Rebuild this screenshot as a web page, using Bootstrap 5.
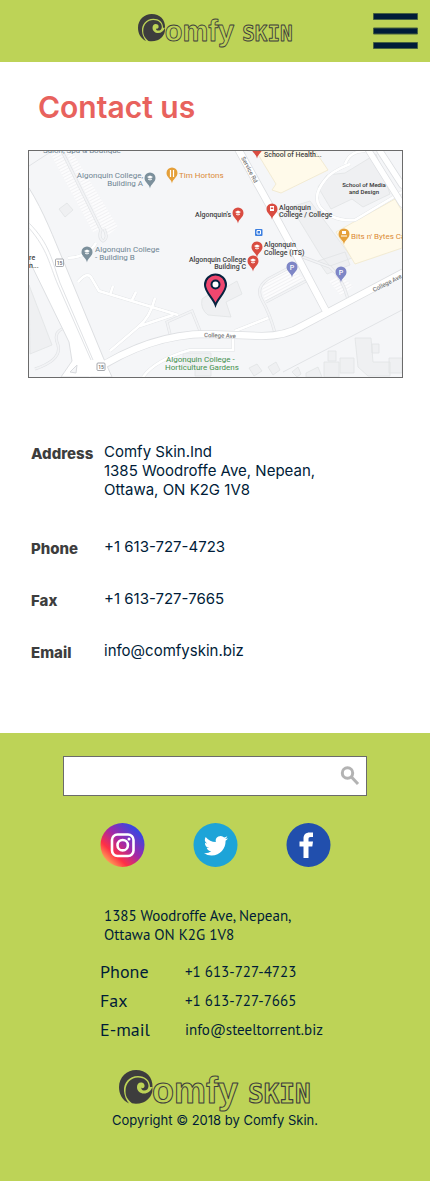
<!DOCTYPE html>
<html lang="en">
<head>
<meta charset="utf-8">
<meta name="viewport" content="width=device-width, initial-scale=1">
<title>Comfy Skin - Contact us</title>
<link href="https://cdn.jsdelivr.net/npm/bootstrap@5.3.0/dist/css/bootstrap.min.css" rel="stylesheet">
<style>
  :root { --lime: #bdd357; --navy: #001c38; --coal: #3d3d3d; --coral: #e8625d; }
  body { font-family: Inter, sans-serif; font-size: 15px; line-height: 19px; color: var(--navy); background: #fff; }
  a { color: inherit; text-decoration: none; }
  svg { display: block; }
  .bg-lime { background: var(--lime); }
  .site-header { display: grid; grid-template-columns: 1fr auto 1fr; height: 62px; }
  .header-logo { width: 155px; grid-column: 2; }
  .footer-logo { width: 192px; margin-top: 28px; }
  .menu-btn { width: 45px; height: 36px; border: 0; border-radius: 0; padding: 0; justify-self: end; margin-right: 12px; }
  .page-title { font-size: 30px; line-height: 38px; font-weight: 600; color: var(--coral); margin: 26px 38px 24px; }
  .map-box { margin: 0 27px 0 28px; border: 1px solid #6b6b6b; }
  .map-box text { font-family: Roboto, sans-serif; font-size: 7px; font-weight: 500; }
  .map-box .place text { font-size: 8px; font-weight: 400; }
  .map-box .fine text, .map-box text.fine { font-size: 6px; }
  .map-box .shield text { font-size: 5px; }
  .details { margin: 64px 31px 71px; display: flex; flex-direction: column; gap: 31px; }
  .details .entry { display: grid; grid-template-columns: 73px 1fr; }
  .details .entry:first-child { margin-bottom: 7px; }
  .details dt { font-weight: 800; color: var(--coal); padding-top: 2px; }
  .site-footer { padding: 23px 0 53px; }
  .search { width: 304px; height: 40px; border: 1px solid #6b6b6b; background: #fff; }
  .search input { border: 0; border-radius: 0; box-shadow: none; background: transparent; }
  .search button { border: 0; padding: 0 6px 0 0; }
  .social { gap: 48px; margin: 27px 0 39px; }
  .footer-info { width: 230px; font-family: "PT Sans", "Noto Sans", sans-serif; font-size: 15px; }
  .footer-info dl { display: grid; grid-template-columns: 85px 1fr; row-gap: 5px; line-height: 24px; }
  .footer-info dt { font-size: 18px; font-weight: 400; }
  .copyright { font-size: 13px; line-height: 16px; }
</style>
</head>
<body>

<svg width="0" height="0" class="position-absolute" aria-hidden="true">
  <defs>
    <symbol id="logo" viewBox="0 0 192 42">
      <path d="M10 33.500 C3 30 0 24 0 17 C0 7 8 0 17 0 C27 0 34 7 33.500 17 L31 17 C31 10 26 6 19 6 C10 6 4.500 13 5 21 Q5.500 28 10 33.500Z" fill="#3d3d3d"/>
      <path d="M13 33.300 C8 29 6.500 26 6.500 21 C6.500 13 12 7.500 19 7.500 C25 7.500 29.500 11 29.500 16 C29.500 19 27.500 20.500 25 20.500 C23 20.500 22 19 22.500 17.500 C23 18.500 25 18.500 25.500 16.500 C26 14 24 12.500 22 12.500 C19.500 12.500 18 14.500 18 17 C18 21 21 23.500 25 23.500 C29 23.500 32 21 33.300 17 C34.500 24 30 30 24 32.500 Q18 34.500 13 33.300Z" fill="#3d3d3d"/>
      <g fill="#bdd357" stroke="#3d3d3d" stroke-linejoin="round" font-weight="700">
        <text x="33" y="33" font-family="Liberation Sans, sans-serif" font-size="36" stroke-width="1">omfy</text>
        <text x="129" y="33" font-family="DejaVu Sans Mono, monospace" font-size="26" stroke-width="1.100">SKIN</text>
      </g>
    </symbol>
    <symbol id="pin" viewBox="-6 -6 12 17">
      <path d="M0 10.500 C-.6 6 -5.500 4.500 -5.500 0 A5.500 5.500 0 0 1 5.500 0 C5.500 4.500 .6 6 0 10.500Z"/>
    </symbol>
    <symbol id="cap" viewBox="-3 -3 6 6">
      <path d="M-3 -1 L0 -2.500 L3 -1 L0 .7Z M-2 .4 L0 1.500 L2 .4 V1.600 L0 2.600 L-2 1.600Z" fill="#fff"/>
    </symbol>
    <linearGradient id="insta" x1=".1" y1=".9" x2=".8" y2=".15">
      <stop offset="0" stop-color="#ffb85c"/><stop offset=".28" stop-color="#ff3045"/><stop offset=".6" stop-color="#a128a8"/><stop offset="1" stop-color="#3b46e0"/>
    </linearGradient>
    <pattern id="hatch" width="3" height="3" patternUnits="userSpaceOnUse" patternTransform="rotate(62)">
      <rect width="3" height="3" fill="#fcfcfd"/><path d="M0 0V3" stroke="#e6e7e9"/>
    </pattern>
  </defs>
</svg>

<header class="site-header bg-lime align-items-center">
  <a href="#" class="header-logo" aria-label="Comfy Skin home"><svg viewBox="0 0 192 42" width="100%"><use href="#logo"/></svg></a>
  <button class="btn menu-btn" type="button" aria-label="Menu">
    <svg width="45" height="36" viewBox="0 0 45 36" fill="#001c38" stroke="#46613f" stroke-width="1"><path d="M.5 .5h44v6H.5zM.5 15h44v6H.5zM.5 29.500h44v6H.5z"/></svg>
  </button>
</header>

<main>
  <h1 class="page-title">Contact us</h1>

  <div class="map-box">
    <svg viewBox="29 151 373 226" width="100%" role="img" aria-label="Map of Algonquin College">
      <rect x="29" y="151" width="373" height="226" fill="#f5f6f8"/>
      <!-- lots and buildings -->
      <g fill="#eff0f2" stroke="#e1e3e5" stroke-width=".8">
        <path d="M29 285 L52 345 L30 354Z M59 209 L67 203 L73 210 L65 217Z"/>
        <path d="M318 187 L327 175 L345 173 L376 154 L390 194 L363 207 L352 199 L331 209Z"/>
        <path d="M291 207 L310 201 L352 258 L330 266 L321 256Z M318 261 L345 252 L350 265 L327 274Z"/>
        <path d="M202 299 Q207 294 216 293 L237 281 L242 294 L226 302 L231 317 L208 315 Q200 309 202 299Z"/>
        <path d="M355 338 H371 L373 362 H390 V376 H368 L358 367Z M328 351 H336 V361 H328Z M340 358 H354 V373 H340Z M324 362 H339 V377 H324Z M389 358 H402 V373 H389Z M372 344 H379 V353 H372Z"/>
        <path d="M249 368 L257 364 L262 371 L254 376Z M268 367 L276 362 L280 370 L273 375Z M292 372 L298 367 L301 374 L297 377Z M306 373 L318 367 L322 377 H306Z"/>
        <path d="M183 353 H211 V376 H195 V365 H183Z"/>
      </g>
      <g fill="#fffaea" stroke="#f0e7cc" stroke-width=".8">
        <path d="M256 151 H315 L328 170 L281 193 L272 190 L276 184Z M336 232 L395 199 L402 211 V248 L355 264Z"/>
      </g>
      <path d="M261 285 L289 267 L304 279 L265 301Z M329 281 L340 275 L353 286 L341 296Z M49 151 L60 151 L103 228 L93 232Z M65 151 L74 155 L118 227 L107 236Z" fill="url(#hatch)"/>
      <!-- minor lanes -->
      <g fill="none" stroke="#e0e2e5" stroke-width="3">
        <path d="M62 151 L101 230 Q98 238 103 241 Q109 238 104 229 M62 329 Q53 333 58 345 Q62 360 35 369"/>
        <path d="M170 334 L167 322 L192 311 L200 331 M275 333 Q270 314 262 300 Q255 288 268 279 L298 263 M266 302 L306 281"/>
        <path d="M300 256 Q316 262 330 267 Q342 277 348 299"/>
      </g>
      <g fill="none" stroke="#f2f3f5" stroke-width="1.800">
        <path d="M62 151 L101 230 Q98 238 103 241 Q109 238 104 229 M62 329 Q53 333 58 345 Q62 360 35 369"/>
        <path d="M170 334 L167 322 L192 311 L200 331 M275 333 Q270 314 262 300 Q255 288 268 279 L298 263 M266 302 L306 281"/>
        <path d="M300 256 Q316 262 330 267 Q342 277 348 299"/>
      </g>
      <g fill="none" stroke-width="3.500" stroke="#e8eaec">
        <path id="lanes" d="M78 282 Q88 270 92 279 L99 291 L178 315 M113 286 L110 295 M136 292 L132 300 M155 298 Q150 318 138 327 L110 351 M173 315 L140 326 M68 258 Q88 257 96 243 M235 331 L268 318 M233 338 V350 H190 Q155 360 143 377 M345 164 Q350 151 365 151 M350 164 Q330 172 325 180 Q312 196 320 207 Q333 222 355 220 L402 192"/>
      </g>
      <use href="#lanes" fill="none" stroke="#fff" stroke-width="2"/>
      <path d="M78 282 Q88 270 92 279 L99 291 L178 315 M113 286 L110 295 M136 292 L132 300 M155 298 Q150 318 138 327 L110 351 M173 315 L140 326 M68 258 Q88 257 96 243 M235 331 L268 318 M233 338 V350 H190 Q155 360 143 377 M345 164 Q350 151 365 151 M350 164 Q330 172 325 180 Q312 196 320 207 Q333 222 355 220 L402 192" fill="none" stroke="#fff" stroke-width="2.200"/>
      <!-- main roads -->
      <g fill="none" stroke="#dddfe2" stroke-linecap="round">
        <path d="M237 147 L272 210 L299 260 L326 311" stroke-width="8"/>
        <path d="M96 370 Q150 334 207 334 L262 336 Q286 336 302 326 L402 273" stroke-width="8"/>
        <path d="M369 151 L402 204 M380 151 L402 185" stroke-width="7"/>
      </g>
      <path d="M29 188 C44 212 54 239 63 260 L103 357 L112 377 H61 L72 361 L69 342 L29 260Z" fill="#fff" stroke="#dddfe2"/>
      <g fill="none" stroke="#fff" stroke-linecap="round">
        <path d="M237 147 L272 210 L299 260 L326 311" stroke-width="6.500"/>
        <path d="M90 373 Q150 334 207 334 L262 336 Q286 336 302 326 L402 273" stroke-width="6.500"/>
        <path d="M369 151 L402 204 M380 151 L402 185" stroke-width="5.500"/>
      </g>
      <path d="M29 223 C50 244 52 261 60 283 L93 360 M29 228 C48 250 49 264 58 285 L91 360 M29 166 L52 151 M283 372 L402 310" fill="none" stroke="#e1e3e6"/>
      <path d="M70 372 L77 365 L76 373Z" fill="#f5f6f8" stroke="#d8dade"/>
      <g fill="#fff" stroke="#8f9399" stroke-width=".8"><rect x="55.500" y="259" width="8" height="7.500" rx="1"/><rect x="97" y="363" width="8" height="7.500" rx="1"/></g>
      <g class="shield" fill="#666" text-anchor="middle"><text x="59.500" y="265">15</text><text x="101" y="369">15</text></g>
      <!-- pins -->
      <g fill="#7c909c"><use href="#pin" x="144" y="172" width="12" height="17"/><use href="#pin" x="81" y="246" width="12" height="17"/></g>
      <g fill="#e5a03a"><use href="#pin" x="166" y="167" width="12" height="17"/><use href="#pin" x="338" y="228" width="12" height="17"/></g>
      <g fill="#d94c41"><use href="#pin" x="251" y="142" width="12" height="17"/><use href="#pin" x="232" y="207" width="12" height="17"/><use href="#pin" x="266" y="203" width="12" height="17"/><use href="#pin" x="251" y="241" width="12" height="17"/><use href="#pin" x="247" y="255" width="12" height="17"/></g>
      <g fill="#7e86c6"><use href="#pin" x="286" y="261" width="12" height="17"/><use href="#pin" x="335" y="266" width="12" height="17"/></g>
      <use href="#cap" x="147" y="175" width="6" height="6"/><use href="#cap" x="84" y="249" width="6" height="6"/><use href="#cap" x="235" y="210" width="6" height="6"/><use href="#cap" x="254" y="244" width="6" height="6"/><use href="#cap" x="250" y="258" width="6" height="6"/>
      <path d="M270 206h4v5h-4z M342 231h4v3h-4z M341 235.500h6v1h-6z" fill="#fff"/><path d="M270.800 207.500h2.400v1.500h-2.400z" fill="#d94c41"/>
      <path d="M170.500 170v2.500M170.500 172v5M173.500 170v7" stroke="#fff" stroke-width="1.200"/>
      <g fill="#fff" text-anchor="middle"><text x="292" y="270">P</text><text x="341" y="275">P</text></g>
      <rect x="255" y="229" width="7.500" height="7" rx="1" fill="#3c7fe0"/><path d="M257 230.500h3.500v3.500H257z" fill="none" stroke="#fff"/>
      <path d="M215.500 305 C213 298 205 292 205 285 A10.500 10.500 0 0 1 226 285 C226 292 218 298 215.500 305Z" fill="#ef476f" stroke="#06223f" stroke-width="2"/>
      <circle cx="215.500" cy="284.500" r="4" fill="#fff" stroke="#06223f" stroke-width="2"/>
      <!-- place names -->
      <g class="place" fill="#6f8593">
        <text x="43" y="153">Salon, Spa &amp; Boutique</text>
        <g text-anchor="end"><text x="143" y="178">Algonquin College,</text><text x="143" y="186">Building A</text></g>
        <text x="95" y="252">Algonquin College</text><text x="95" y="260">- Building B</text>
      </g>
      <g class="place" fill="#db8a35"><text x="179" y="178">Tim Hortons</text><text x="351" y="239">Bits n' Bytes Ca</text></g>
      <g fill="#3f3f3f">
        <text x="264" y="157">School of Health...</text>
        <g text-anchor="end"><text x="231" y="217">Algonquin's</text><text x="246" y="262">Algonquin College</text><text x="246" y="269">Building C</text></g>
        <text x="279" y="210">Algonquin</text><text x="279" y="217">College / College</text>
        <text x="264" y="247">Algonquin</text><text x="264" y="255">College (ITS)</text>
        <text x="29" y="260">re</text><text x="29" y="268">n...</text>
      </g>
      <g class="fine" fill="#333" text-anchor="middle"><text x="364" y="187">School of Media</text><text x="364" y="194">and Design</text></g>
      <g class="fine" fill="#777">
        <text x="204" y="337" transform="rotate(2 204 337)">College Ave</text>
        <text x="374" y="292" transform="rotate(-27 374 292)">College Ave</text>
        <text x="241" y="158" transform="rotate(62 241 158)">Service Rd</text>
      </g>
      <g class="place" fill="#43904e"><text x="166" y="362">Algonquin College -</text><text x="165" y="370">Horticulture Gardens</text></g>
    </svg>
  </div>

  <dl class="details">
    <div class="entry"><dt>Address</dt><dd class="mb-0">Comfy Skin.Ind<br>1385 Woodroffe Ave, Nepean,<br>Ottawa, ON K2G 1V8</dd></div>
    <div class="entry"><dt>Phone</dt><dd class="mb-0">+1 613-727-4723</dd></div>
    <div class="entry"><dt>Fax</dt><dd class="mb-0">+1 613-727-7665</dd></div>
    <div class="entry"><dt>Email</dt><dd class="mb-0"><a href="mailto:info@comfyskin.biz">info@comfyskin.biz</a></dd></div>
  </dl>
</main>

<footer class="site-footer bg-lime d-flex flex-column align-items-center">
  <form class="search d-flex" role="search">
    <input class="form-control" type="search" aria-label="Search">
    <button class="btn" type="submit" aria-label="Submit search">
      <svg width="20" height="20" viewBox="0 0 20 20" fill="none" stroke="#b3b3b3" stroke-width="3"><circle cx="7.500" cy="7" r="5.200"/><path d="M11 10.500 L18 18"/></svg>
    </button>
  </form>

  <nav class="social d-flex" aria-label="Social media">
    <a href="#" aria-label="Instagram"><svg width="45" height="44" viewBox="0 0 45 44"><circle cx="22.500" cy="22" r="22" fill="url(#insta)"/><g fill="none" stroke="#fff" stroke-width="2.600"><rect x="12" y="11.500" width="21.500" height="21.500" rx="5.500"/><circle cx="22.700" cy="22.200" r="5.200"/></g><circle cx="29" cy="16" r="1.500" fill="#fff"/></svg></a>
    <a href="#" aria-label="Twitter"><svg width="45" height="44" viewBox="0 0 45 44"><circle cx="22.500" cy="22" r="22" fill="#1da4d8"/><path transform="translate(11 10) scale(1.500)" fill="#fff" d="M5.026 15c6.038 0 9.341-5.003 9.341-9.334 0-.14 0-.282-.006-.422A6.685 6.685 0 0 0 16 3.542a6.658 6.658 0 0 1-1.889.518 3.301 3.301 0 0 0 1.447-1.817 6.533 6.533 0 0 1-2.087.793A3.286 3.286 0 0 0 7.875 6.030a9.325 9.325 0 0 1-6.767-3.429 3.289 3.289 0 0 0 1.018 4.382A3.323 3.323 0 0 1 .64 6.575v.045a3.288 3.288 0 0 0 2.632 3.218 3.203 3.203 0 0 1-.865.115 3.230 3.230 0 0 1-.614-.057 3.283 3.283 0 0 0 3.067 2.277A6.588 6.588 0 0 1 .78 13.580a6.320 6.320 0 0 1-.78-.045A9.344 9.344 0 0 0 5.026 15z"/></svg></a>
    <a href="#" aria-label="Facebook"><svg width="45" height="44" viewBox="0 0 45 44"><circle cx="22.500" cy="22" r="22" fill="#214fad"/><path fill="#fff" d="M17.500 35 V23.500 H13.500 V18.500 H17.500 V15.500 C17.500 11.500 20 9.500 23.500 9.500 H27 V14 H24.500 C23 14 22.500 14.800 22.500 16 V18.500 H27 L26.300 23.500 H22.500 V35Z"/></svg></a>
  </nav>

  <div class="footer-info">
    <address class="ms-1 mb-3">1385 Woodroffe Ave, Nepean,<br>Ottawa ON K2G 1V8</address>
    <dl class="mb-0">
      <dt>Phone</dt><dd class="mb-0">+1 613-727-4723</dd>
      <dt>Fax</dt><dd class="mb-0">+1 613-727-7665</dd>
      <dt>E-mail</dt><dd class="mb-0"><a href="mailto:info@steeltorrent.biz">info@steeltorrent.biz</a></dd>
    </dl>
  </div>

  <div class="footer-logo"><svg viewBox="0 0 192 42" width="100%" role="img" aria-label="Comfy Skin"><use href="#logo"/></svg></div>
  <p class="copyright mb-0">Copyright © 2018 by Comfy Skin.</p>
</footer>

<script src="https://cdn.jsdelivr.net/npm/bootstrap@5.3.0/dist/js/bootstrap.bundle.min.js"></script>
</body>
</html>
